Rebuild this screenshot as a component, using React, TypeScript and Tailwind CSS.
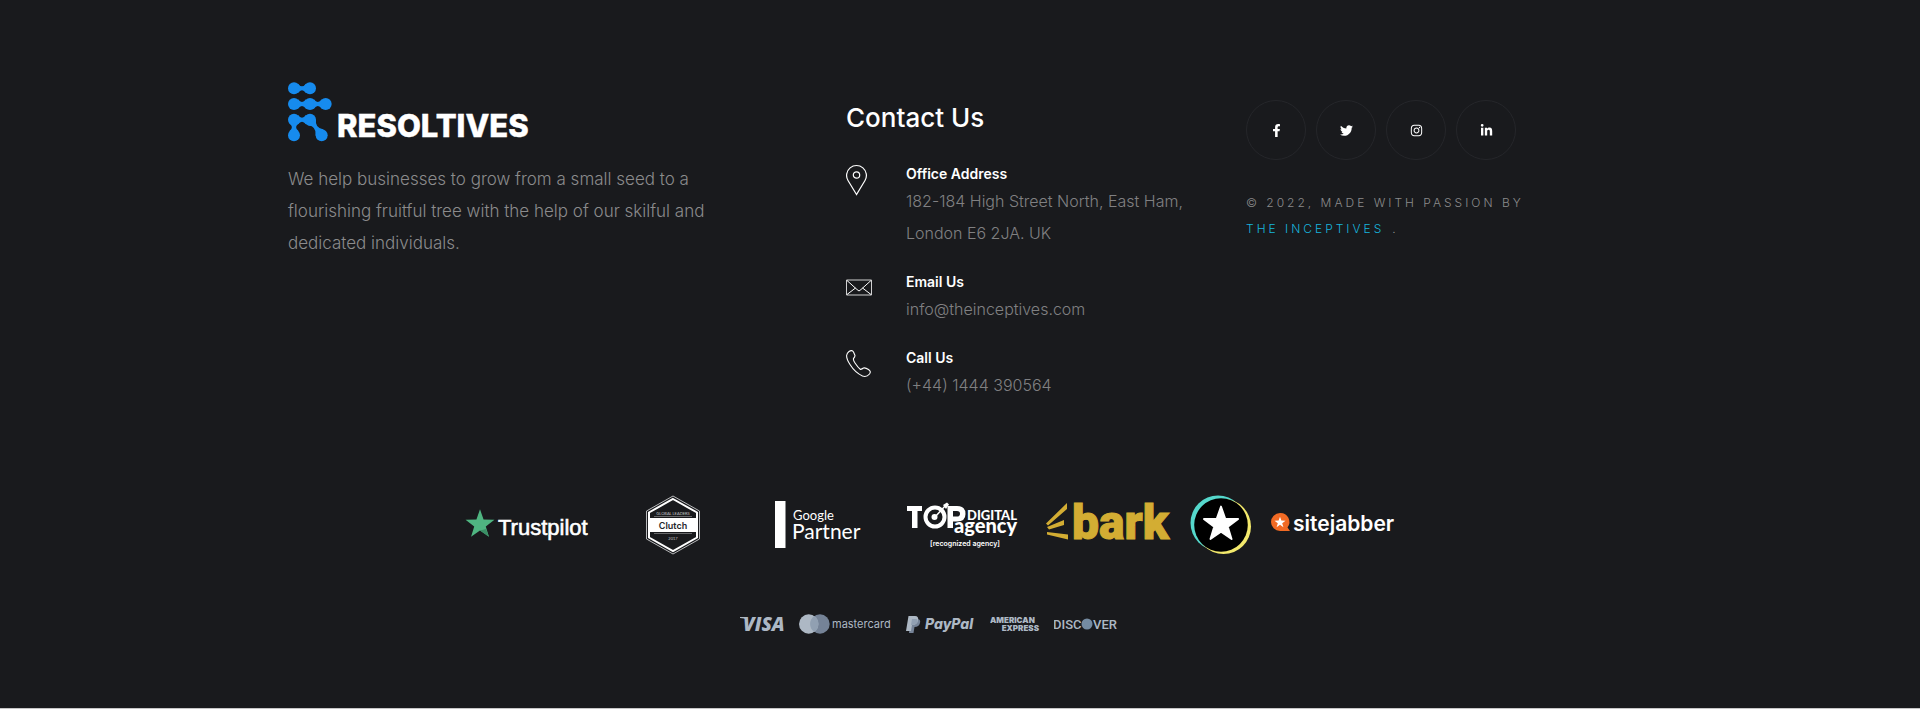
import type { ReactNode } from "react";
import { FaFacebookF, FaInstagram, FaLinkedinIn, FaTwitter } from "react-icons/fa";

const horizontalNeck = "M30 5Q42 21 54 5V33Q42 17 30 33Z";

function BrandLogo() {
  return (
    <svg width="250" height="60" viewBox="0 0 250 60" role="img" aria-label="Resoltives">
      <g fill="#168bee" transform="scale(.33333)">
        <circle cx="18" cy="19" r="18" />
        <circle cx="66" cy="19" r="18" />
        <path d={horizontalNeck} />
        <g transform="translate(0 47)">
          <circle cx="18" cy="19" r="18" />
          <circle cx="66" cy="19" r="18" />
          <circle cx="113" cy="19" r="18" />
          <path d={horizontalNeck} />
          <path d={horizontalNeck} transform="translate(47.5 0)" />
        </g>
        <g transform="translate(0 94)">
          <circle cx="18" cy="19" r="18" />
          <circle cx="66" cy="19" r="18" />
          <circle cx="18" cy="66" r="18" />
          <circle cx="101" cy="66" r="18" />
          <path d={horizontalNeck} />
          <path d="M4 30Q20 42 4 54H32Q16 42 32 30Z" />
          <path d="M10 -15Q29 4 48 -15V15Q29 -4 10 15Z" transform="translate(66 19) rotate(53.3)" />
        </g>
      </g>
      <text x="49" y="55" fill="#fff" stroke="#fff" strokeWidth=".4" className="font-['Inter'] text-[31px] font-extrabold">
        RESOLTIVES
      </text>
    </svg>
  );
}

const star = "M0 -10L2.35 -3.24L9.51 -3.09L3.8 1.24L5.88 8.09L0 4L-5.88 8.09L-3.8 1.24L-9.51 -3.09L-2.35 -3.24Z";

function Trustpilot() {
  return (
    <svg width="126" height="60" viewBox="0 0 126 60" role="img" aria-label="Trustpilot">
      <path d={star} fill="#4fb581" transform="translate(15 29.500) scale(1.52)" />
      <path d="M15 35.5L21 34.1L23.900 41.800Z" fill="#3b8f66" />
      <text x="33" y="40" fill="#fff" stroke="#fff" strokeWidth=".6" className="font-['Liberation_Sans'] text-[22px]">
        Trustpilot
      </text>
    </svg>
  );
}

function Clutch() {
  return (
    <svg width="126" height="60" viewBox="0 0 126 60" role="img" aria-label="Clutch Global Leaders 2017">
      <path d="M63 1L89.5 16V44L63 59L36.500 44V16Z" fill="none" stroke="#b9babc" strokeWidth="1" />
      <path d="M63 4L87 17.500V42.500L63 56L39 42.500V17.500Z" fill="none" stroke="#fff" strokeWidth="2" />
      <path d="M39 23H87V37H39Z" fill="#fff" />
      <path d="M44 21.500H82M44 38.500H82" stroke="#8b8c8e" strokeWidth=".7" />
      <g textAnchor="middle" className="font-['Lato']">
        <text x="63" y="19.500" fill="#c4c5c7" className="text-[4px]">GLOBAL LEADERS</text>
        <text x="63" y="33.500" fill="#24262b" className="font-['Inter'] text-[9px] font-semibold">Clutch</text>
        <text x="63" y="45" fill="#c4c5c7" className="text-[4px]">2017</text>
      </g>
    </svg>
  );
}

function GooglePartner() {
  return (
    <svg width="126" height="60" viewBox="0 0 126 60" role="img" aria-label="Google Partner">
      <path d="M20 6H30.500V53H20Z" fill="#fff" />
      <g fill="#fff" className="font-['Lato']">
        <text x="38" y="25" className="text-[13px]">Google</text>
        <text x="37" y="44" className="text-[21px]">Partner</text>
      </g>
    </svg>
  );
}

function TopDigitalAgency() {
  return (
    <svg width="126" height="60" viewBox="0 0 126 60" role="img" aria-label="Top Digital Agency">
      <g fill="#fff" className="font-['Lato']">
        <path d="M7 11H22V16H17.500V33H12V16H7Z" />
        <circle cx="35" cy="22" r="9.500" fill="none" stroke="#fff" strokeWidth="4" />
        <circle cx="34.500" cy="22" r="3" />
        <path d="M35 22L46 10" stroke="#fff" strokeWidth="1.500" />
        <path d="M43 10L47 7.500L49 9.500L46 14Z" />
        <path fillRule="evenodd" d="M47.500 11H57Q65.500 11 65.500 19Q65.500 26.500 57 26.500H53V33H47.500ZM53 16V21.500H57Q60 21.500 60 18.700Q60 16 57 16Z" />
        <text x="67" y="25" className="text-[13px] font-black">DIGITAL</text>
        <text x="54" y="38" className="text-[20px] font-black">agency</text>
        <text x="30" y="51" className="font-['Inter'] text-[7px] font-semibold">[recognized agency]</text>
      </g>
    </svg>
  );
}

function Bark() {
  return (
    <svg width="126" height="60" viewBox="0 0 126 60" role="img" aria-label="Bark">
      <g fill="#d3ad33">
        <path d="M1 28.500L22 8V14L3 30.500ZM2 32L19 25V30L4 34.500ZM2 37L23 39.500V44.500L2 39.500Z" />
        <text x="27" y="44" stroke="#d3ad33" strokeWidth="1" className="font-['Roboto'] text-[48px] font-black">
          bark
        </text>
      </g>
    </svg>
  );
}

function StarBadge() {
  return (
    <svg width="62" height="60" viewBox="0 0 62 60" role="img" aria-label="Reviews">
      <circle cx="28" cy="28" r="27.500" fill="#55d8cc" />
      <circle cx="33.500" cy="31.500" r="27.500" fill="#f3e96c" />
      <circle cx="31" cy="30" r="26.800" fill="#000" />
      <path d={star} fill="#fff" stroke="#fff" strokeWidth="1" strokeLinejoin="round" transform="translate(31 29.500) scale(1.800)" />
    </svg>
  );
}

function Sitejabber() {
  return (
    <svg width="126" height="60" viewBox="0 0 126 60" role="img" aria-label="Sitejabber">
      <path d="M9 18A9 9 0 1 0 9 36H19L16.500 32.500A9 9 0 0 0 9 18Z" fill="#f16a24" />
      <path d={star} fill="#fff" transform="translate(9 27.500) scale(.58)" />
      <text x="22" y="36" fill="#fff" className="font-['Inter'] text-[21px] font-semibold">sitejabber</text>
    </svg>
  );
}

function Visa() {
  return (
    <svg width="45" height="24" viewBox="0 0 45 24" role="img" aria-label="Visa">
      <path d="M0 5H6L8 8Q4 6 0 6Z" fill="#adb8c4" />
      <text x="3" y="19" fill="#adb8c4" className="font-['Open_Sans'] text-[19px] font-extrabold italic">VISA</text>
    </svg>
  );
}

function Mastercard() {
  return (
    <svg width="93" height="24" viewBox="0 0 93 24" role="img" aria-label="Mastercard">
      <circle cx="21" cy="12" r="9.700" fill="#758397" />
      <circle cx="9.700" cy="12" r="9.700" fill="#adb8c4" />
      <path d="M15.300 4A9.700 9.700 0 0 1 15.300 20A9.700 9.700 0 0 1 15.300 4Z" fill="#91a0b2" />
      <text x="33" y="16" fill="#adb8c4" className="font-['Inter'] text-[11px]">mastercard</text>
    </svg>
  );
}

function PayPal() {
  return (
    <svg width="70" height="24" viewBox="0 0 70 24" role="img" aria-label="PayPal">
      <path d="M5 7H11Q15 7 14 11Q13 15 8.500 15L7.500 21H3Z" fill="#758397" />
      <path d="M2.500 4H9Q13 4 12 8.500Q11 13 6 13L5 19H0Z" fill="#adb8c4" />
      <path d="M6 7H10.500Q12.500 8 11 11Q9.500 13 6 13H5Z" fill="#91a0b2" />
      <text x="19" y="17" fill="#adb8c4" className="font-['Inter'] text-[14px] font-extrabold italic">PayPal</text>
    </svg>
  );
}

function AmericanExpress() {
  return (
    <svg width="50" height="24" viewBox="0 0 50 24" role="img" aria-label="American Express">
      <g fill="#adb8c4" className="font-['Inter'] text-[8px] font-black">
        <text x="0" y="11">AMERICAN</text>
        <text x="49" y="19" textAnchor="end">EXPRESS</text>
      </g>
    </svg>
  );
}

function Discover() {
  return (
    <svg width="66" height="24" viewBox="0 0 66 24" role="img" aria-label="Discover">
      <g fill="#adb8c4" className="font-['Roboto'] text-[13px] font-medium">
        <text x="-1" y="17">DISC</text>
        <text x="39" y="17">VER</text>
      </g>
      <circle cx="33" cy="12" r="5.500" fill="#758ba1" />
    </svg>
  );
}

function PinIcon() {
  return (
    <svg width="26" height="32" viewBox="0 0 26 32" fill="none" stroke="#fff" strokeWidth="1.200" aria-hidden="true">
      <path d="M10.500 30.500L2 16.500A9.900 9.900 0 1 1 19 16.500Z" />
      <circle cx="10.500" cy="11" r="3.200" />
    </svg>
  );
}

function MailIcon() {
  return (
    <svg width="26" height="32" viewBox="0 0 26 32" fill="none" stroke="#fff" aria-hidden="true">
      <path d="M.5 8H25.500V23H.5Z" stroke="#d0d0d1" />
      <path d="M1 8.500L11 17.500L13 19L15 17.500L25 8.500M1 22.500L9.500 16M25 22.500L16.500 16" />
    </svg>
  );
}

function PhoneIcon() {
  return (
    <svg width="26" height="32" viewBox="0 0 26 32" fill="none" stroke="#fff" strokeWidth="1.100" strokeLinejoin="round" aria-hidden="true">
      <path d="M3 3.500Q6 1.500 7.500 4L9 7.500Q9 9 7.500 10.500Q7 12 9 15Q12 19.500 14.500 21.500Q16 21 17.500 20Q19.500 19.500 22.500 21.500Q25.500 23.500 23.500 26Q20.500 29.500 16.500 28Q9 24.500 4 16.500Q.5 11 .6 7.500Q1 5 3 3.500Z" />
    </svg>
  );
}

function ContactItem({ icon, title, children }: { icon: ReactNode; title: string; children: ReactNode }) {
  return (
    <li className="flex gap-[34px]">
      <span className="w-[26px] shrink-0 pt-px">{icon}</span>
      <div>
        <h3 className="text-[14px] leading-[22px] font-semibold text-white">{title}</h3>
        <div className="text-[16px] leading-[32px] font-light text-[#808082]">{children}</div>
      </div>
    </li>
  );
}

const socials = [
  { label: "Facebook", Icon: FaFacebookF },
  { label: "Twitter", Icon: FaTwitter },
  { label: "Instagram", Icon: FaInstagram },
  { label: "LinkedIn", Icon: FaLinkedinIn },
];

export default function App() {
  return (
    <footer className="border-b border-[#c6c6c7] bg-[#191a1d] px-6 pt-[82px] pb-[72px] font-['Inter',sans-serif]">
      <div className="mx-auto grid max-w-[1344px] gap-y-12 lg:grid-cols-[558fr_400fr_386fr]">
        <section>
          <a href="#home" className="block w-fit">
            <BrandLogo />
          </a>
          <p className="mt-[21px] max-w-[430px] text-[17px] leading-[32px] font-light text-[#8b8b8c]">
            We help businesses to grow from a small seed to a flourishing fruitful tree with the help of our skilful and
            dedicated individuals.
          </p>
        </section>

        <section className="pt-[18px]">
          <h2 className="text-[26px] leading-[36px] font-medium text-white">Contact Us</h2>
          <ul className="mt-[27px] flex flex-col gap-[22px]">
            <ContactItem icon={<PinIcon />} title="Office Address">
              182-184 High Street North, East Ham,
              <br />
              London E6 2JA. UK
            </ContactItem>
            <ContactItem icon={<MailIcon />} title="Email Us">
              <a href="mailto:info@theinceptives.com">info@theinceptives.com</a>
            </ContactItem>
            <ContactItem icon={<PhoneIcon />} title="Call Us">
              <a href="tel:+441444390564">(+44) 1444 390564</a>
            </ContactItem>
          </ul>
        </section>

        <section className="pt-[18px]">
          <ul className="flex gap-[10px]">
            {socials.map(({ label, Icon }) => (
              <li key={label}>
                <a
                  href={`#${label.toLowerCase()}`}
                  aria-label={label}
                  className="flex size-[60px] items-center justify-center rounded-full border border-[#25262a] text-[13px] text-white"
                >
                  <Icon />
                </a>
              </li>
            ))}
          </ul>
          <p className="mt-[30px] text-[12px] leading-[26px] font-light tracking-[3px] text-[#8b8b8c] uppercase">
            © 2022, Made with passion by
            <br />
            <a href="#the-inceptives" className="mr-[8px] text-[#17b4dc]">
              The Inceptives
            </a>
            .
          </p>
        </section>
      </div>

      <div className="mt-[94px] flex flex-wrap items-center justify-center gap-[19px] lg:pr-[58px]">
        <Trustpilot />
        <Clutch />
        <GooglePartner />
        <TopDigitalAgency />
        <Bark />
        <StarBadge />
        <Sitejabber />
      </div>

      <div className="mt-[57px] flex flex-wrap items-center justify-center gap-[14px] lg:pr-[60px]">
        <Visa />
        <Mastercard />
        <PayPal />
        <AmericanExpress />
        <Discover />
      </div>
    </footer>
  );
}
